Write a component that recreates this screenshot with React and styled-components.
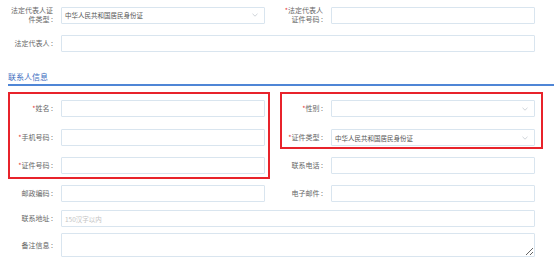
import React from "react";
import styled, { createGlobalStyle } from "styled-components";

const GlobalStyle = createGlobalStyle`
  * { box-sizing: border-box; }
  body {
    margin: 0;
    background: #ffffff;
    font-family: "Noto Sans CJK SC", "Noto Sans", "Liberation Sans", sans-serif;
  }
`;

const Page = styled.div`
  position: relative;
  width: 554px;
  height: 267px;
  overflow: hidden;
  padding-top: 6px;
`;

const Row = styled.div`
  display: grid;
  grid-template-columns: 270px 270px;
  margin-top: ${(p) => p.$mt || 0}px;
`;

const Field = styled.div`
  display: flex;
  align-items: center;
  gap: 6px;
  padding-left: 10px;
  grid-column: ${(p) => (p.$wide ? "1 / span 2" : "auto")};
`;

const Label = styled.label`
  width: 45px;
  flex-shrink: 0;
  text-align: right;
  font-size: 7px;
  line-height: 9px;
  color: #666666;
  word-break: break-all;
  padding-right: 2px;
`;

const Star = styled.span`
  color: #e4393c;
`;

const Input = styled.input`
  width: ${(p) => (p.$wide ? 474 : 204)}px;
  height: 17px;
  border: 1px solid #d9e5ef;
  border-radius: 1px;
  padding: 0 3px;
  font-family: inherit;
  font-size: 6.5px;
  color: #444;
  outline: none;

  &::placeholder {
    color: #c4c4c4;
  }
`;

const Select = styled.div`
  width: 204px;
  height: 17px;
  border: 1px solid #d9e5ef;
  border-radius: 1px;
  padding: 0 6px 0 3px;
  display: flex;
  align-items: center;
  justify-content: space-between;
  font-size: 6.5px;
  color: #555;
`;

const TextArea = styled.textarea`
  width: 474px;
  height: 24px;
  border: 1px solid #d9e5ef;
  border-radius: 1px;
  resize: vertical;
  outline: none;
  display: block;
`;

const Section = styled.div`
  margin: 17px 0 0 8px;
  height: 17px;
  border-bottom: 2px solid #4f86d6;
  font-size: 8px;
  line-height: 15px;
  color: #3d6cc0;
`;

const Mark = styled.div`
  position: absolute;
  top: ${(p) => p.$top}px;
  left: ${(p) => p.$left}px;
  width: ${(p) => p.$w}px;
  height: ${(p) => p.$h}px;
  border: 2px solid #e8232b;
  pointer-events: none;
`;

const Chevron = () => (
  <svg width="6" height="4" viewBox="0 0 6 4">
    <polyline points="0.5,0.8 3,3.2 5.5,0.8" fill="none" stroke="#c2c8cf" strokeWidth="0.8" />
  </svg>
);

const Text = ({ req, children }) => (
  <Label>
    {req && <Star>*</Star>}
    {`${children} :`}
  </Label>
);

const App = () => {
  return (
    <>
      <GlobalStyle />
      <Page>
        <Row>
          <Field>
            <Text>法定代表人证件类型</Text>
            <Select>
              中华人民共和国居民身份证
              <Chevron />
            </Select>
          </Field>
          <Field>
            <Text req>法定代表人证件号码</Text>
            <Input />
          </Field>
        </Row>
        <Row $mt={11}>
          <Field $wide>
            <Text>法定代表人</Text>
            <Input $wide />
          </Field>
        </Row>

        <Section>联系人信息</Section>

        <Row $mt={14}>
          <Field>
            <Text req>姓名</Text>
            <Input />
          </Field>
          <Field>
            <Text req>性别</Text>
            <Select>
              <span />
              <Chevron />
            </Select>
          </Field>
        </Row>
        <Row $mt={12}>
          <Field>
            <Text req>手机号码</Text>
            <Input />
          </Field>
          <Field>
            <Text req>证件类型</Text>
            <Select>
              中华人民共和国居民身份证
              <Chevron />
            </Select>
          </Field>
        </Row>
        <Row $mt={11}>
          <Field>
            <Text req>证件号码</Text>
            <Input />
          </Field>
          <Field>
            <Text>联系电话</Text>
            <Input />
          </Field>
        </Row>
        <Row $mt={11}>
          <Field>
            <Text>邮政编码</Text>
            <Input />
          </Field>
          <Field>
            <Text>电子邮件</Text>
            <Input />
          </Field>
        </Row>
        <Row $mt={8}>
          <Field $wide>
            <Text>联系地址</Text>
            <Input $wide placeholder="150汉字以内" />
          </Field>
        </Row>
        <Row $mt={6}>
          <Field $wide>
            <Text>备注信息</Text>
            <TextArea />
          </Field>
        </Row>

        <Mark $top={92} $left={8} $w={262} $h={87} />
        <Mark $top={92} $left={280} $w={263} $h={57} />
      </Page>
    </>
  );
};

export default App;
